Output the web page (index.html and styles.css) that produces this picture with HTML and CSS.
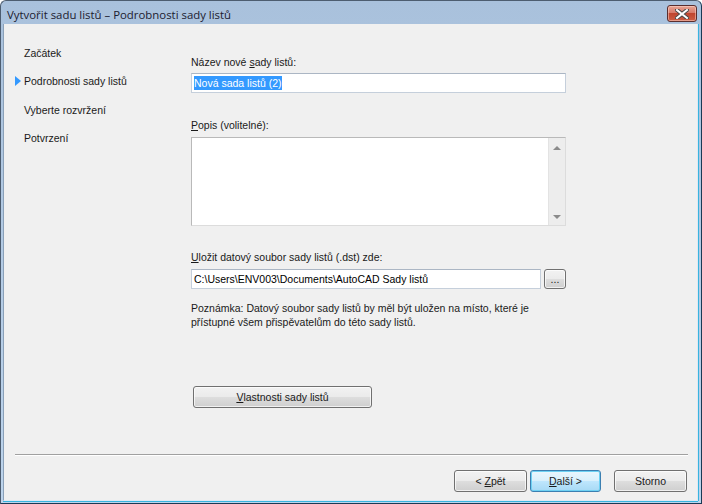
FILE: index.html
```html
<!DOCTYPE html>
<html lang="cs">
<head>
    <meta charset="UTF-8">
    <title>Vytvořit sadu listů – Podrobnosti sady listů</title>
    <link rel="stylesheet" href="styles.css">
</head>
<body>
    <div class="window">
        <div class="titlebar">
            <span class="title">Vytvořit sadu listů – Podrobnosti sady listů</span>
            <button class="close">
                <svg width="14" height="10" viewBox="0 0 14 10">
                    <path d="M2 1 L12 9 M12 1 L2 9" stroke="#4a4a4a" stroke-width="4" stroke-linecap="square"/>
                    <path d="M2 1 L12 9 M12 1 L2 9" stroke="#ffffff" stroke-width="2" stroke-linecap="square"/>
                </svg>
            </button>
        </div>

        <div class="client">
            <div class="main">
                <ul class="steps">
                    <li><span class="marker"></span>Začátek</li>
                    <li class="current"><span class="marker"></span>Podrobnosti sady listů</li>
                    <li><span class="marker"></span>Vyberte rozvržení</li>
                    <li><span class="marker"></span>Potvrzení</li>
                </ul>

                <div class="form">
                    <label class="label first">Název nové <u>s</u>ady listů:</label>
                    <div class="textbox"><span class="selected">Nová sada listů (2)</span></div>

                    <label class="label popis"><u>P</u>opis (volitelné):</label>
                    <div class="memo">
                        <div class="memo-text"></div>
                        <div class="scrollbar">
                            <span class="arrow up"></span>
                            <span class="arrow down"></span>
                        </div>
                    </div>

                    <label class="label ulozit"><u>U</u>ložit datový soubor sady listů (.dst) zde:</label>
                    <div class="path-row">
                        <div class="textbox path">C:\Users\ENV003\Documents\AutoCAD Sady listů</div>
                        <button class="btn browse">...</button>
                    </div>

                    <p class="note">Poznámka: Datový soubor sady listů by měl být uložen na místo, které je přístupné všem přispěvatelům do této sady listů.</p>

                    <button class="btn props"><u>V</u>lastnosti sady listů</button>
                </div>
            </div>

            <div class="separator"></div>

            <div class="footer">
                <button class="btn nav">&lt; <u>Z</u>pět</button>
                <button class="btn nav default"><u>D</u>alší &gt;</button>
                <button class="btn nav cancel">Storno</button>
            </div>
        </div>
    </div>
</body>
</html>
```

FILE: styles.css
```css
body {
    margin: 0;
    padding: 0;
    background: #ffffff;
}

.window {
    width: 702px;
    height: 504px;
    box-sizing: border-box;
    display: flex;
    flex-direction: column;
    background: linear-gradient(#a9c1dc, #bdd4ec);
    border: 1px solid #4d5d70;
    border-bottom-color: #1a3a55;
    border-right-color: #1a3a55;
    border-radius: 6px 6px 0 0;
    font-family: 'Liberation Sans', Arial, sans-serif;
    font-size: 10.5px;
    color: #000;
    overflow: hidden;
}

.titlebar {
    height: 23px;
    display: flex;
    align-items: center;
    justify-content: space-between;
    padding: 0 4px 0 6px;
}

.title {
    font-family: 'Open Sans', 'Liberation Sans', sans-serif;
    font-size: 11.4px;
    color: #1c2030;
    margin-top: 3px;
}

.close {
    width: 30px;
    height: 17px;
    margin-top: 2px;
    padding: 0;
    border: 1px solid #5a2e2e;
    border-radius: 3px;
    background: linear-gradient(#e8a493 0%, #d77a6a 45%, #c0452f 50%, #cc5d43 100%);
    box-shadow: inset 0 0 0 1px rgba(255, 220, 210, 0.5);
    display: flex;
    align-items: center;
    justify-content: center;
}

.client {
    flex: 1;
    margin: 0 3px 2px 2px;
    background: #f0f0f0;
    border-left: 1px solid #8aa0b8;
    border-right: 1px solid #dfe9f3;
    border-bottom: 1px solid #dfe9f3;
    box-shadow: 1px 0 0 #38b4df, 0 1px 0 #38b4df;
    display: flex;
    flex-direction: column;
}

.main {
    display: flex;
    height: 430px;
}

.steps {
    list-style: none;
    margin: 0;
    padding: 22px 0 0 11px;
    width: 176px;
}

.steps li {
    display: flex;
    align-items: center;
    height: 14px;
    margin-bottom: 14.3px;
    color: #1a1a1a;
}

.marker {
    width: 9px;
    flex: none;
}

.current .marker::before {
    content: "";
    display: block;
    width: 0;
    height: 0;
    border-top: 5px solid transparent;
    border-bottom: 5px solid transparent;
    border-left: 6px solid #3399ff;
}

.form {
    width: 375px;
    display: flex;
    flex-direction: column;
}

.label {
    display: block;
    height: 14px;
    line-height: 14px;
    color: #1a1a1a;
}

.label.first {
    margin-top: 31px;
    margin-bottom: 4px;
}

.label.popis {
    margin-top: 25px;
    margin-bottom: 5px;
}

.label.ulozit {
    margin-top: 24px;
    margin-bottom: 5px;
}

.textbox {
    height: 20px;
    box-sizing: border-box;
    background: #fff;
    border: 1px solid #c5cfdb;
    border-top-color: #abb6c4;
    padding: 1px 2px;
    line-height: 16px;
    white-space: nowrap;
}

.selected {
    background: #3399ff;
    color: #fff;
    padding: 1px 0;
}

.memo {
    height: 89px;
    box-sizing: border-box;
    background: #fff;
    border: 1px solid #b9b9b9;
    border-right-color: #dcdcdc;
    border-bottom-color: #dcdcdc;
    display: flex;
}

.memo-text {
    flex: 1;
}

.scrollbar {
    width: 17px;
    background: #ededed;
    border-left: 1px solid #e3e3e3;
    display: flex;
    flex-direction: column;
    justify-content: space-between;
    align-items: center;
    padding: 8px 0 6px;
    box-sizing: border-box;
}

.arrow {
    width: 0;
    height: 0;
    border-left: 4px solid transparent;
    border-right: 4px solid transparent;
}

.arrow.up {
    border-bottom: 4px solid #8a8a8a;
}

.arrow.down {
    border-top: 4px solid #8a8a8a;
}

.path-row {
    display: flex;
    gap: 3px;
}

.path {
    flex: 1;
}

.btn {
    font-family: 'Liberation Sans', Arial, sans-serif;
    font-size: 10.5px;
    color: #1a1a1a;
    border: 1px solid #707070;
    border-radius: 3px;
    background: linear-gradient(#f2f2f2 0%, #ebebeb 48%, #dddddd 52%, #cfcfcf 100%);
    box-shadow: inset 0 0 0 1px rgba(255, 255, 255, 0.7);
    padding: 0;
    height: 21px;
}

.browse {
    width: 22px;
    height: 20px;
    line-height: 10px;
}

.note {
    margin: 12px 0 0;
    line-height: 14px;
    width: 370px;
    color: #1a1a1a;
}

.props {
    width: 179px;
    height: 22px;
    margin: 57px 0 0 2px;
}

.separator {
    height: 1px;
    margin: 0 9px 0 11px;
    background: #a0a0a0;
    border-bottom: 1px solid #fff;
}

.footer {
    display: flex;
    justify-content: flex-end;
    padding: 14px 10px 0 0;
}

.nav {
    width: 73px;
    height: 22px;
}

.nav.default {
    width: 71px;
    margin-left: 3px;
    border-color: #3c7fb1;
    background: linear-gradient(#eaf6fd 0%, #d9f0fc 48%, #bee6fd 52%, #a7d9f5 100%);
    box-shadow: inset 0 0 0 1px #6ed1f3;
}

.nav.cancel {
    margin-left: 13px;
}
```
